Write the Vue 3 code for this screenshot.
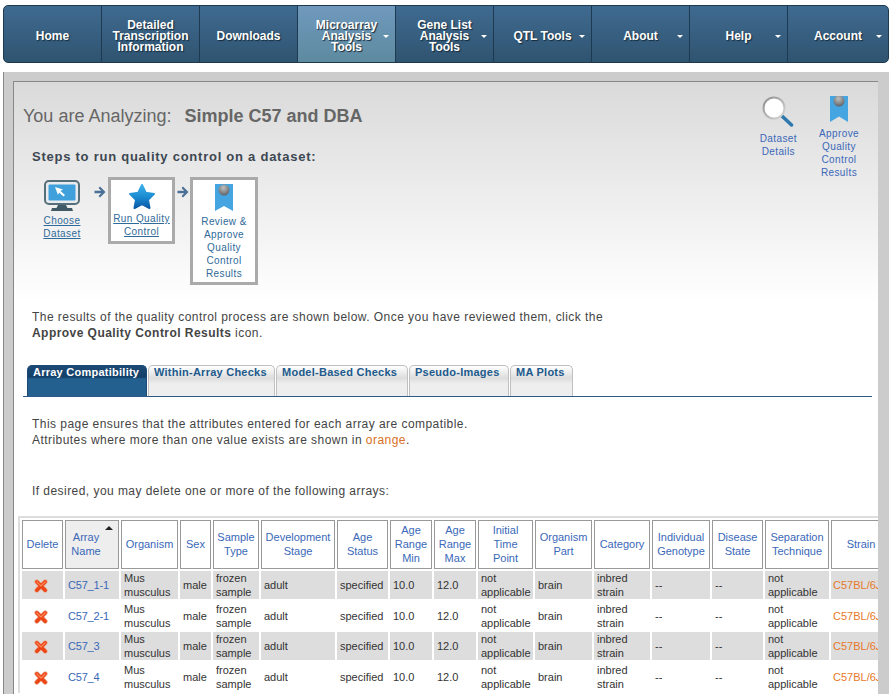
<script setup>
const navItems = [
  { label: ['Home'] },
  { label: ['Detailed', 'Transcription', 'Information'] },
  { label: ['Downloads'] },
  { label: ['Microarray', 'Analysis', 'Tools'], caret: true, active: true },
  { label: ['Gene List', 'Analysis', 'Tools'], caret: true },
  { label: ['QTL Tools'], caret: true },
  { label: ['About'], caret: true },
  { label: ['Help'], caret: true },
  { label: ['Account'], caret: true, last: true }
]

const tabs = ['Array Compatibility', 'Within-Array Checks', 'Model-Based Checks', 'Pseudo-Images', 'MA Plots']

const columns = [
  { title: ['Delete'], width: 41 },
  { title: ['Array', 'Name'], width: 54, sorted: true },
  { title: ['Organism'], width: 57 },
  { title: ['Sex'], width: 31 },
  { title: ['Sample', 'Type'], width: 46 },
  { title: ['Development', 'Stage'], width: 74 },
  { title: ['Age', 'Status'], width: 51 },
  { title: ['Age', 'Range', 'Min'], width: 42 },
  { title: ['Age', 'Range', 'Max'], width: 42 },
  { title: ['Initial', 'Time', 'Point'], width: 55 },
  { title: ['Organism', 'Part'], width: 57 },
  { title: ['Category'], width: 56 },
  { title: ['Individual', 'Genotype'], width: 58 },
  { title: ['Disease', 'State'], width: 51 },
  { title: ['Separation', 'Technique'], width: 64 },
  { title: ['Strain'], width: 60 }
]

const arrays = ['C57_1-1', 'C57_2-1', 'C57_3', 'C57_4']
</script>

<template>
  <div class="page">
    <nav class="nav">
      <a
        v-for="item in navItems"
        :key="item.label[0]"
        class="nav-item"
        :class="{ active: item.active, last: item.last }"
      >
        <span class="nav-text">
          <span v-for="line in item.label" :key="line" class="nav-line">{{ line }}</span>
        </span>
        <i v-if="item.caret" class="caret"></i>
      </a>
    </nav>

    <div class="main">
      <div class="panel">
        <div class="top">
          <div class="top-left">
            <h1 class="title">You are Analyzing: <b>Simple C57 and DBA</b></h1>
            <h2 class="steps-head">Steps to run quality control on a dataset:</h2>
            <div class="steps">
              <div class="step first">
                <svg width="38" height="32" viewBox="0 0 38 32">
                  <rect x="2" y="1" width="34" height="23" rx="4" fill="#e8ecee" stroke="#566e79" stroke-width="2" />
                  <rect x="5.500" y="4.500" width="27" height="16" rx="1" fill="#3fa0dc" />
                  <path d="M12 7l8 2.500-2.500 1.500 4.500 4-1.500 1.500-4.500-4L15 15z" fill="#fff" />
                  <path d="M15 25h8l1.500 3H29l1 3H8l1-3h4.500z" fill="#3f5a66" />
                </svg>
                <a class="step-link">Choose</a>
                <a class="step-link">Dataset</a>
              </div>
              <svg class="arrow" width="12" height="12" viewBox="0 0 12 12">
                <path d="M6 0.500l5.500 5.500L6 11.500 4.500 10l2.700-2.700H0.500V4.700h6.700L4.500 2z" fill="#4a7098" />
              </svg>
              <div class="step box">
                <svg width="28" height="27" viewBox="0 0 28 27">
                  <defs>
                    <linearGradient id="star" x1="0" y1="0" x2="0" y2="1">
                      <stop offset="0" stop-color="#3ab0ea" />
                      <stop offset="0.55" stop-color="#1a88d0" />
                      <stop offset="1" stop-color="#0a5aa5" />
                    </linearGradient>
                  </defs>
                  <path d="M14 2l3.700 7.800 8.300 1.100-6 5.800 1.500 8.300L14 21l-7.500 4 1.500-8.300-6-5.800 8.300-1.100z" fill="url(#star)" stroke="url(#star)" stroke-width="2" stroke-linejoin="round" />
                </svg>
                <a class="step-link first-link">Run Quality</a>
                <a class="step-link">Control</a>
              </div>
              <svg class="arrow" width="12" height="12" viewBox="0 0 12 12">
                <path d="M6 0.500l5.500 5.500L6 11.500 4.500 10l2.700-2.700H0.500V4.700h6.700L4.500 2z" fill="#4a7098" />
              </svg>
              <div class="step box tall">
                <svg width="20" height="28" viewBox="0 0 20 28">
                  <defs>
                    <radialGradient id="ball" cx="0.45" cy="0.3" r="0.7">
                      <stop offset="0" stop-color="#c0c0c0" />
                      <stop offset="1" stop-color="#5f6468" />
                    </radialGradient>
                  </defs>
                  <path d="M1 0h18v27l-9-5-9 5z" fill="#45a5e0" />
                  <circle cx="10" cy="6" r="5.500" fill="url(#ball)" />
                </svg>
                <span class="step-text first-text">Review &amp;</span>
                <span class="step-text">Approve</span>
                <span class="step-text">Quality</span>
                <span class="step-text">Control</span>
                <span class="step-text">Results</span>
              </div>
            </div>
          </div>

          <div class="quick">
            <div class="quick-item details">
              <svg width="32" height="31" viewBox="0 0 32 31">
                <defs>
                  <linearGradient id="ring" x1="0" y1="0" x2="1" y2="1">
                    <stop offset="0" stop-color="#8f8f8f" />
                    <stop offset="1" stop-color="#d8d8d8" />
                  </linearGradient>
                </defs>
                <path d="M20 20l9.500 9" stroke="#2f78ad" stroke-width="3.500" stroke-linecap="round" />
                <circle cx="12" cy="12" r="10.500" fill="#fff" stroke="url(#ring)" stroke-width="2" />
              </svg>
              <a class="quick-link">Dataset</a>
              <a class="quick-link">Details</a>
            </div>
            <div class="quick-item approve">
              <svg width="20" height="27" viewBox="0 0 20 27">
                <path d="M1 0h18v26l-9-5.500-9 5.500z" fill="#45a5e0" />
                <circle cx="10" cy="5" r="5.500" fill="url(#ball)" />
              </svg>
              <a class="quick-link">Approve</a>
              <a class="quick-link">Quality</a>
              <a class="quick-link">Control</a>
              <a class="quick-link">Results</a>
            </div>
          </div>
        </div>

        <p class="results">
          The results of the quality control process are shown below. Once you have reviewed them, click the<br />
          <b>Approve Quality Control Results</b> icon.
        </p>

        <div class="tabs">
          <a v-for="(tab, i) in tabs" :key="tab" class="tab" :class="{ selected: i === 0 }">{{ tab }}</a>
        </div>

        <p class="note">
          This page ensures that the attributes entered for each array are compatible.<br />
          Attributes where more than one value exists are shown in <span class="orange">orange</span>.
        </p>

        <p class="desired">If desired, you may delete one or more of the following arrays:</p>

        <div class="table-wrap">
          <table class="grid">
            <colgroup>
              <col v-for="col in columns" :key="col.title.join()" :style="{ width: col.width + 'px' }" />
            </colgroup>
            <thead>
              <tr>
                <th v-for="col in columns" :key="col.title.join()" :class="{ sorted: col.sorted }">
                  <span v-for="line in col.title" :key="line" class="th-line">{{ line }}</span>
                  <i v-if="col.sorted" class="sort"></i>
                </th>
              </tr>
            </thead>
            <tbody>
              <tr v-for="name in arrays" :key="name">
                <td class="del">
                  <svg width="14" height="14" viewBox="0 0 15 15">
                    <path d="M3 3l9 9M12 3l-9 9" stroke="#eab092" stroke-width="5.200" stroke-linecap="round" />
                    <path d="M3 3l9 9M12 3l-9 9" stroke="#ec4518" stroke-width="3.800" stroke-linecap="round" />
                    <path d="M3 3l4.500 4.500L12 3" fill="none" stroke="#ff8a5a" stroke-width="1.200" stroke-linecap="round" />
                  </svg>
                </td>
                <td class="link">{{ name }}</td>
                <td>Mus<br />musculus</td>
                <td>male</td>
                <td>frozen<br />sample</td>
                <td>adult</td>
                <td>specified</td>
                <td>10.0</td>
                <td>12.0</td>
                <td>not<br />applicable</td>
                <td>brain</td>
                <td>inbred<br />strain</td>
                <td>--</td>
                <td>--</td>
                <td>not<br />applicable</td>
                <td class="strain">C57BL/6J</td>
              </tr>
            </tbody>
          </table>
        </div>
      </div>
    </div>
  </div>
</template>

<style scoped>
.page {
  height: 694px;
  overflow: hidden;
  font-family: "Liberation Sans", Arial, sans-serif;
  background: #fff;
  padding: 5px 2px 0 3px;
  box-sizing: border-box;
}

.nav {
  display: flex;
  height: 58px;
  box-sizing: border-box;
  border: 1px solid #1d3a50;
  border-radius: 5px;
  overflow: hidden;
  background: linear-gradient(#3f6a90, #2f5470);
}
.nav-item {
  position: relative;
  width: 98px;
  flex: none;
  display: flex;
  align-items: center;
  justify-content: center;
  box-sizing: border-box;
  padding-top: 4px;
  border-right: 1px solid #1d3a50;
  color: #fff;
  font-size: 12px;
  font-weight: bold;
  line-height: 11px;
  text-align: center;
  text-shadow: 1px 1px 1px #16293a;
}
.nav-item.last {
  flex: 1;
  border-right: 0;
}
.nav-item.active {
  background: linear-gradient(#7099bd, #5d8a9f);
}
.nav-line {
  display: block;
}
.caret {
  position: absolute;
  right: 6px;
  top: 29px;
  width: 0;
  height: 0;
  border-left: 3px solid transparent;
  border-right: 3px solid transparent;
  border-top: 3px solid #fff;
}

.main {
  margin-top: 9px;
  height: 640px;
  background: #ccc;
  border-left: 1px solid #888;
  box-sizing: border-box;
  padding: 9px 11px 0 9px;
}
.panel {
  height: 100%;
  overflow: hidden;
  box-sizing: border-box;
  border: 1px solid #888;
  border-width: 1px 0 0 1px;
  background: linear-gradient(#dadada 0, #fff 220px);
  color: #444;
}

.top {
  display: flex;
  justify-content: space-between;
  height: 227px;
}
.top-left {
  padding-left: 9px;
}
.title {
  margin: 24px 0 0;
  font-size: 18px;
  line-height: 20px;
  font-weight: normal;
  color: #666;
}
.title b {
  margin-left: 8px;
}
.steps-head {
  margin: 23px 0 0 9px;
  font-size: 13px;
  line-height: 16px;
  font-weight: bold;
  color: #3d4752;
  letter-spacing: 0.75px;
}
.steps {
  display: flex;
  align-items: flex-start;
  margin-top: 12px;
  margin-left: 9px;
}
.step {
  display: flex;
  flex-direction: column;
  align-items: center;
  font-size: 10px;
  line-height: 13px;
  letter-spacing: 0.4px;
  color: #2f6a98;
}
.step.first {
  width: 60px;
  margin-top: 3px;
}
.step.first svg {
  margin-bottom: 2px;
}
.step-link {
  text-decoration: underline;
}
.step-text {
  display: block;
}
.arrow {
  margin: 9px 2px 0 2px;
  flex: none;
}
.box + .arrow {
  margin-right: 1px;
}
.step.box {
  width: 67px;
  height: 67px;
  box-sizing: border-box;
  border: 3px solid #aaa;
  background: #fff;
  padding-top: 3px;
}
.step.tall {
  width: 68px;
  height: 108px;
  padding-top: 4px;
}
.first-link {
  margin-top: 2px;
}
.first-text {
  margin-top: 3px;
}

.quick {
  display: flex;
  align-items: flex-start;
  margin-right: 19px;
  font-size: 10px;
  line-height: 13px;
  letter-spacing: 0.4px;
  color: #3a68b8;
  text-align: center;
}
.quick-item {
  display: flex;
  flex-direction: column;
  align-items: center;
}
.quick-item.details {
  margin-top: 14px;
  margin-right: 22px;
}
.quick-item.details svg {
  margin-bottom: 5px;
}
.quick-item.approve {
  margin-top: 14px;
}
.quick-item.approve svg {
  margin-bottom: 4px;
}

.results {
  margin: 0 0 0 18px;
  font-size: 12px;
  line-height: 16px;
  letter-spacing: 0.45px;
  color: #444;
}

.tabs {
  display: flex;
  gap: 1px;
  margin: 24px 6px 0 9px;
  padding-left: 4px;
  height: 32px;
  box-sizing: border-box;
  border-bottom: 1px solid #2a5a85;
}
.tab {
  box-sizing: border-box;
  height: 31px;
  padding: 0 0 0 5px;
  font-size: 11px;
  line-height: 12px;
  font-weight: bold;
  letter-spacing: 0.25px;
  color: #205a8c;
  border: 1px solid #c0c0c0;
  border-bottom: 0;
  border-radius: 5px 5px 0 0;
  background: linear-gradient(#fff 0, #ddd 12px, #eee 18px);
}
.tab:nth-child(1) { width: 120px; }
.tab:nth-child(2) { width: 127px; }
.tab:nth-child(3) { width: 132px; }
.tab:nth-child(4) { width: 100px; }
.tab:nth-child(5) { width: 63px; }
.tab.selected {
  color: #fff;
  border-color: #1a4a75;
  background: linear-gradient(#1d4a75 0, #123f68 11px, #24608f 13px);
}

.note {
  margin: 19px 0 0 18px;
  font-size: 12px;
  line-height: 16px;
  letter-spacing: 0.45px;
  color: #444;
}
.orange {
  color: #d8701e;
}
.desired {
  margin: 35px 0 0 18px;
  font-size: 12px;
  line-height: 16px;
  letter-spacing: 0.45px;
  color: #444;
}

.table-wrap {
  margin: 17px 0 0 4px;
  border-top: 2px solid #ddd;
  border-left: 2px solid #ddd;
  width: 900px;
}
.grid {
  table-layout: fixed;
  width: 873px;
  border-collapse: separate;
  border-spacing: 2px;
  font-size: 11px;
  line-height: 14px;
  color: #333;
}
.grid th {
  position: relative;
  height: 49px;
  box-sizing: border-box;
  padding: 0 2px 2px;
  border: 1px solid #999;
  font-weight: normal;
  color: #3a68b8;
  background: #fff;
  text-align: center;
}
.grid th.sorted {
  background: #eee;
  padding-right: 14px;
}
.th-line {
  display: block;
}
.sort {
  position: absolute;
  top: 5px;
  right: 5px;
  width: 0;
  height: 0;
  border-left: 4px solid transparent;
  border-right: 4px solid transparent;
  border-bottom: 4px solid #222;
}
.grid td {
  padding: 0 3px;
  white-space: nowrap;
  overflow: hidden;
}
.grid tbody tr:nth-child(odd) td {
  height: 28px;
  background: #ddd;
}
.grid tbody tr:nth-child(even) td {
  height: 29px;
}
.grid td.del {
  padding: 0;
}
.grid td.del svg {
  display: block;
  margin: 2px 0 0 12px;
}
.grid td.link {
  color: #3a68b8;
  letter-spacing: -0.2px;
}
.grid td.strain {
  color: #e8782a;
  padding-left: 2px;
}
</style>
